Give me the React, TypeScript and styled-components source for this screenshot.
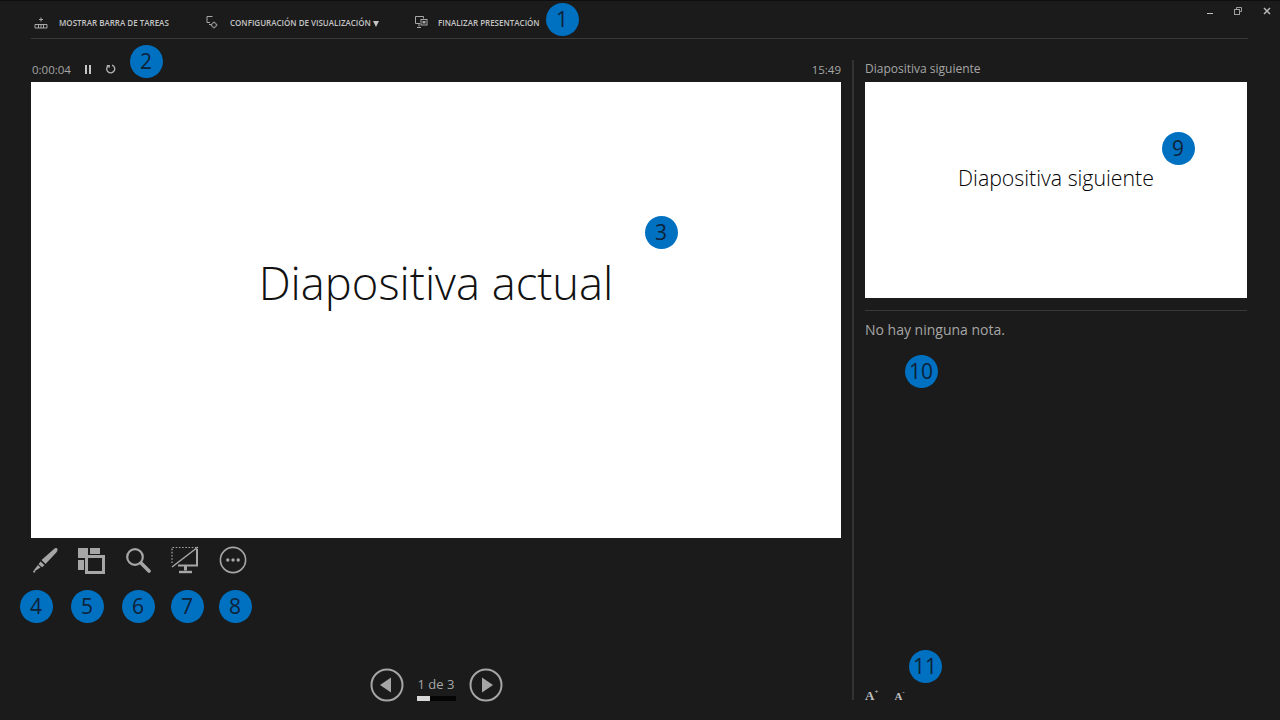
import styled, { createGlobalStyle } from 'styled-components';

const GlobalStyle = createGlobalStyle`
  html, body {
    margin: 0;
    padding: 0;
    background: #1b1b1b;
    overflow: hidden;
  }
`;

const badges = [
  { n: 1, x: 562, y: 19 },
  { n: 2, x: 146, y: 61 },
  { n: 3, x: 661, y: 232 },
  { n: 4, x: 36, y: 606 },
  { n: 5, x: 87, y: 606 },
  { n: 6, x: 138, y: 606 },
  { n: 7, x: 187, y: 606 },
  { n: 8, x: 235, y: 606 },
  { n: 9, x: 1178, y: 148 },
  { n: 10, x: 921, y: 371 },
  { n: 11, x: 925, y: 666 },
];

const TaskbarIcon = () => (
  <svg width="14" height="12" viewBox="0 0 14 12" fill="none" stroke="#a8a8a8" strokeWidth="1">
    <path d="M7 0.5v4M5 2.5h4" />
    <path d="M1 7.5h12v3.5H1zM4.5 7.5v3.5M7 7.5v3.5M9.5 7.5v3.5" />
  </svg>
);

const DisplayIcon = () => (
  <svg width="12" height="13" viewBox="0 0 12 13" fill="none" stroke="#a8a8a8" strokeWidth="1">
    <path d="M6.5 0.5H1v6h3M3 8.5h2" />
    <circle cx="8" cy="9" r="2.4" />
    <path d="M8 5.6v1M8 11.4v1M4.6 9h1M10.4 9h1" />
  </svg>
);

const EndIcon = () => (
  <svg width="13" height="13" viewBox="0 0 13 13" fill="none" stroke="#a8a8a8" strokeWidth="1">
    <path d="M0.5 0.5h8v2M5 7.5H0.5v-7M4 7.5v3M2 11.5h4" />
    <rect x="6" y="3.5" width="6" height="5.5" />
    <rect x="8" y="5.5" width="2" height="1.5" fill="#a8a8a8" />
  </svg>
);

const PenIcon = () => (
  <svg width="28" height="28" viewBox="0 0 28 28" fill="#a6a6a6">
    <path d="M22 3c1.5-1.5 3.5-1 3.5.5.2 1-.4 2-1.2 3L13.5 18l-4-4z" />
    <path d="M8.5 15.5l4 3.7-2.5 2-3.5-3z" />
    <path d="M6 19l2.5 2.5L3 25l-1-1z" />
    <circle cx="2.2" cy="25.6" r="1.1" />
  </svg>
);

const GridIcon = () => (
  <svg width="28" height="27" viewBox="0 0 28 27">
    <rect x="1" y="1" width="10" height="10" fill="#a6a6a6" />
    <rect x="13" y="1" width="10" height="6" fill="#a6a6a6" />
    <rect x="1" y="13" width="6" height="10" fill="#a6a6a6" />
    <rect x="9.5" y="9.5" width="17" height="16" fill="#1b1b1b" stroke="#a6a6a6" strokeWidth="3" />
  </svg>
);

const SearchIcon = () => (
  <svg width="26" height="26" viewBox="0 0 26 26" fill="none" stroke="#a6a6a6">
    <circle cx="10" cy="10" r="7.8" strokeWidth="2.2" />
    <path d="M16 16l8 8" strokeWidth="3.6" strokeLinecap="round" />
  </svg>
);

const ScreenIcon = () => (
  <svg width="28" height="28" viewBox="0 0 28 28" fill="none" stroke="#a6a6a6">
    <path d="M1 17V1.5h25" strokeWidth="1.2" strokeDasharray="1.6 1.6" />
    <path d="M1 21L27 1" strokeWidth="1.5" />
    <path d="M26 3v16.5H7" strokeWidth="2" />
    <path d="M14.5 19.5v5" strokeWidth="3" />
    <path d="M8 26h13" strokeWidth="2.4" />
  </svg>
);

const MoreIcon = () => (
  <svg width="28" height="28" viewBox="0 0 28 28" fill="none">
    <circle cx="14" cy="14" r="12.6" stroke="#a6a6a6" strokeWidth="1.6" />
    <circle cx="8.8" cy="14" r="1.7" fill="#a6a6a6" />
    <circle cx="14" cy="14" r="1.7" fill="#a6a6a6" />
    <circle cx="19.2" cy="14" r="1.7" fill="#a6a6a6" />
  </svg>
);

const NavArrow = ({ next }: { next?: boolean }) => (
  <svg width="34" height="34" viewBox="0 0 34 34" fill="none">
    <circle cx="17" cy="17" r="15.5" stroke="#a6a6a6" strokeWidth="2" />
    <path d={next ? 'M13 9.5L24 17l-11 7.5z' : 'M21 9.5L10 17l11 7.5z'} fill="#a6a6a6" />
  </svg>
);

const App = () => {
  return (
    <Page>
      <GlobalStyle />
      <TopBar>
        <TopButton $width={172} $gap={11}>
          <TaskbarIcon />
          <span>Mostrar barra de tareas</span>
        </TopButton>
        <TopButton $width={209} $gap={12}>
          <DisplayIcon />
          <span>
            Configuración de visualización
            <Caret />
          </span>
        </TopButton>
        <TopButton $width={130} $gap={10}>
          <EndIcon />
          <span>Finalizar presentación</span>
        </TopButton>
      </TopBar>

      <WindowControls>
        <Minimize />
        <svg width="8" height="8" viewBox="0 0 8 8" fill="none" stroke="#a0a0a0">
          <path d="M2.5 2V.5h5v4H6" />
          <rect x=".5" y="2.5" width="5" height="5" />
        </svg>
        <svg width="8" height="8" viewBox="0 0 8 8" stroke="#b8b8b8" strokeWidth="1.5">
          <path d="M1 1l6 6M7 1L1 7" />
        </svg>
      </WindowControls>

      <Main>
        <LeftColumn>
          <StatusRow>
            <TimerGroup>
              <StatusText>0:00:04</StatusText>
              <PauseIcon>
                <i />
                <i />
              </PauseIcon>
              <svg width="10" height="10" viewBox="0 0 10 10" fill="none" stroke="#b5b5b5" strokeWidth="1.3">
                <path d="M2.4 1.6a4 4 0 1 0 3.6-.5" />
                <path d="M0.8 1.6h2.4v2.2" />
              </svg>
            </TimerGroup>
            <StatusText>15:49</StatusText>
          </StatusRow>
          <CurrentSlide>Diapositiva actual</CurrentSlide>
          <ToolRow>
            <PenIcon />
            <GridIcon />
            <SearchIcon />
            <ScreenIcon />
            <MoreIcon />
          </ToolRow>
          <NavRow>
            <NavArrow />
            <Counter>
              <CounterText>1 de 3</CounterText>
              <ProgressTrack>
                <ProgressFill style={{ width: `${(1 / 3) * 100}%` }} />
              </ProgressTrack>
            </Counter>
            <NavArrow next />
          </NavRow>
        </LeftColumn>

        <RightColumn>
          <NextLabel>Diapositiva siguiente</NextLabel>
          <NextSlide>Diapositiva siguiente</NextSlide>
          <Separator />
          <Notes>No hay ninguna nota.</Notes>
          <FontButtons>
            <FontButton $size={13}>A<sup>+</sup></FontButton>
            <FontButton $size={11}>A<sup>-</sup></FontButton>
          </FontButtons>
        </RightColumn>
      </Main>

      {badges.map((b) => (
        <Badge key={b.n} style={{ left: b.x - 16.5, top: b.y - 17 }}>
          {b.n}
        </Badge>
      ))}
    </Page>
  );
};

export default App;

const Page = styled.div`
  position: relative;
  box-sizing: border-box;
  width: 1280px;
  height: 720px;
  padding: 0 32px 0 31px;
  background: #1b1b1b;
  border-top: 1px solid #0e0e0e;
  font-family: 'Open Sans', 'Liberation Sans', sans-serif;
  overflow: hidden;
`;

const TopBar = styled.div`
  display: flex;
  align-items: center;
  height: 38px;
  padding-top: 6px;
  box-sizing: border-box;
  border-bottom: 1px solid #3a3a3a;
`;

const TopButton = styled.div<{ $width: number; $gap: number }>`
  display: flex;
  align-items: center;
  gap: ${(p) => p.$gap}px;
  width: ${(p) => p.$width}px;
  padding-left: 3px;
  box-sizing: border-box;
  color: #c4c4c4;
  font-size: 8px;
  font-weight: 600;
  text-transform: uppercase;
  white-space: nowrap;
`;

const Caret = styled.i`
  display: inline-block;
  margin-left: 2px;
  border-left: 3px solid transparent;
  border-right: 3px solid transparent;
  border-top: 6px solid #c4c4c4;
  vertical-align: -1px;
`;

const WindowControls = styled.div`
  position: absolute;
  top: 6px;
  right: 9px;
  display: flex;
  align-items: center;
  gap: 21px;
`;

const Minimize = styled.div`
  width: 6px;
  height: 1px;
  margin-top: 4px;
  background: #c0c0c0;
`;

const Main = styled.div`
  display: flex;
  height: 661px;
  padding-top: 21px;
  box-sizing: border-box;
`;

const LeftColumn = styled.div`
  display: flex;
  flex-direction: column;
  width: 810px;
  & > * {
    flex: none;
  }
`;

const StatusRow = styled.div`
  display: flex;
  align-items: center;
  justify-content: space-between;
  height: 22px;
  padding-bottom: 4px;
  box-sizing: border-box;
`;

const TimerGroup = styled.div`
  display: flex;
  align-items: center;
  gap: 14px;
  padding-left: 1px;
`;

const StatusText = styled.span`
  color: #a6a6a6;
  font-size: 11.5px;
`;

const PauseIcon = styled.span`
  display: flex;
  gap: 2px;
  margin-right: 1px;
  i {
    display: block;
    width: 2px;
    height: 9px;
    background: #c4c4c4;
  }
`;

const CurrentSlide = styled.div`
  display: flex;
  align-items: center;
  justify-content: center;
  height: 456px;
  padding-bottom: 56px;
  box-sizing: border-box;
  background: #ffffff;
  color: #111111;
  font-size: 45.3px;
  font-weight: 300;
`;

const ToolRow = styled.div`
  display: flex;
  align-items: center;
  gap: 20px;
  height: 28px;
  margin-top: 8px;
  padding-left: 1px;
  & > svg {
    flex: none;
  }
  & > svg:first-child {
    margin-right: -3px;
  }
`;

const NavRow = styled.div`
  display: flex;
  align-items: center;
  justify-content: center;
  gap: 13px;
  height: 34px;
  margin-top: 94px;
`;

const Counter = styled.div`
  display: flex;
  flex-direction: column;
  align-items: center;
  gap: 2px;
  margin-top: 4px;
`;

const CounterText = styled.span`
  color: #a6a6a6;
  font-size: 13px;
  line-height: 20px;
`;

const ProgressTrack = styled.div`
  width: 39px;
  height: 5px;
  background: #050505;
`;

const ProgressFill = styled.div`
  height: 100%;
  background: #d8d8d8;
`;

const RightColumn = styled.div`
  display: flex;
  flex-direction: column;
  flex: 1;
  margin-left: 11px;
  margin-right: 1px;
  padding-left: 11px;
  border-left: 2px solid #333333;
`;

const NextLabel = styled.div`
  height: 22px;
  color: #a6a6a6;
  font-size: 12px;
  line-height: 17px;
`;

const NextSlide = styled.div`
  display: flex;
  align-items: center;
  justify-content: center;
  height: 216px;
  padding-bottom: 26px;
  box-sizing: border-box;
  background: #ffffff;
  color: #000000;
  font-size: 21.3px;
  font-weight: 300;
`;

const Separator = styled.div`
  height: 1px;
  margin-top: 12px;
  background: #3a3a3a;
`;

const Notes = styled.div`
  margin-top: 9px;
  color: #a6a6a6;
  font-size: 14px;
  line-height: 19px;
  flex: 1;
`;

const FontButtons = styled.div`
  display: flex;
  align-items: flex-end;
  gap: 16px;
  height: 16px;
  margin-bottom: -3px;
`;

const FontButton = styled.span<{ $size: number }>`
  color: #c0c0c0;
  font-family: 'Liberation Serif', serif;
  font-size: ${(p) => p.$size}px;
  font-weight: 700;
  line-height: 14px;
  sup {
    font-size: 7px;
    line-height: 0;
    vertical-align: 6px;
  }
`;

const Badge = styled.div`
  position: absolute;
  display: flex;
  align-items: center;
  justify-content: center;
  width: 33px;
  height: 33px;
  border-radius: 50%;
  background: #0070c0;
  color: #0e2238;
  font-size: 21px;
  line-height: 1;
`;
